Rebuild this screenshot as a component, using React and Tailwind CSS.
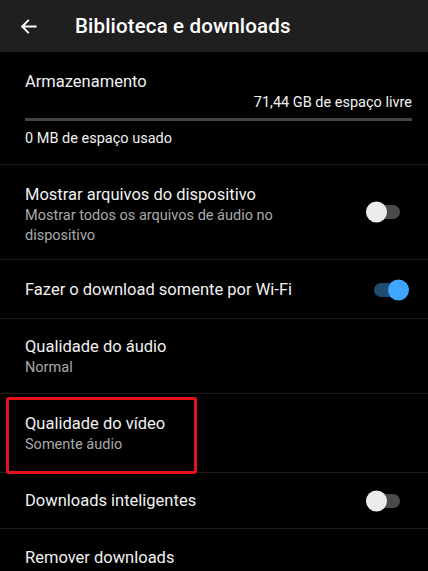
import React from 'react';

const Toggle = ({ on, className = '' }) => (
  <div className={`relative w-[34px] h-[14px] rounded-full ${on ? 'bg-[#1e4d70]' : 'bg-[#4a4a4a]'} ${className}`}>
    <div
      className={`absolute top-1/2 -translate-y-1/2 w-[21px] h-[21px] rounded-full ${
        on ? 'right-[-1px] bg-[#3ea6ff]' : 'left-0 bg-[#ececec]'
      }`}
    />
  </div>
);

const Row = ({ title, subtitle, toggle, pad, boxed }) => (
  <div className={`relative flex items-center border-b border-[#1c1c1c] pl-[25px] ${pad}`}>
    <div className="flex-1 min-w-0">
      <div className="text-[16.5px] leading-[22px] text-[#f1f1f1]">{title}</div>
      {subtitle && (
        <div className="max-w-[310px] text-[14.5px] leading-[20px] text-[#aaaaaa]">{subtitle}</div>
      )}
    </div>
    {toggle}
    {boxed && (
      <div className="absolute left-[6px] top-[3px] w-[191px] h-[77px] border-[3px] border-[#e8101a] rounded-[3px]" />
    )}
  </div>
);

export default function App() {
  return (
    <div className="w-[428px] h-[571px] overflow-hidden bg-black" style={{ fontFamily: 'Roboto, "Liberation Sans", sans-serif' }}>
      <div className="flex items-center h-[52px] bg-[#1f1f1f]">
        <svg className="ml-[19px] w-[19px] h-[19px]" viewBox="0 0 24 24" fill="none" stroke="#ffffff" strokeWidth="2.4" strokeLinecap="square">
          <path d="M21 12H4M11.5 4.5L4 12l7.5 7.5" />
        </svg>
        <div className="ml-[37px] text-[20.5px] font-medium text-white tracking-[0.15px]">Biblioteca e downloads</div>
      </div>

      <div className="border-b border-[#1c1c1c] pl-[25px] pr-[16px] pt-[19px] pb-[15px]">
        <div className="text-[16.5px] leading-[22px] text-[#f1f1f1]">Armazenamento</div>
        <div className="text-right text-[14.5px] leading-[20px] text-[#f1f1f1]">71,44 GB de espaço livre</div>
        <div className="mt-[5px] h-[3px] bg-[#444444]" />
        <div className="mt-[8px] text-[14.5px] leading-[20px] text-[#f1f1f1]">0 MB de espaço usado</div>
      </div>

      <Row
        title="Mostrar arquivos do dispositivo"
        subtitle="Mostrar todos os arquivos de áudio no dispositivo"
        pad="pt-[19px] pb-[13px]"
        toggle={<Toggle className="mr-[28px] -mt-[6px]" />}
      />
      <Row
        title="Fazer o download somente por Wi-Fi"
        pad="pt-[19px] pb-[17px]"
        toggle={<Toggle on className="mr-[20px]" />}
      />
      <Row title="Qualidade do áudio" subtitle="Normal" pad="pt-[17px] pb-[15px]" />
      <Row title="Qualidade do vídeo" subtitle="Somente áudio" pad="pt-[19px] pb-[17px]" boxed />
      <Row
        title="Downloads inteligentes"
        pad="pt-[17px] pb-[16px]"
        toggle={<Toggle className="mr-[28px]" />}
      />
      <Row title="Remover downloads" pad="pt-[18px] pb-[17px]" />
    </div>
  );
}
